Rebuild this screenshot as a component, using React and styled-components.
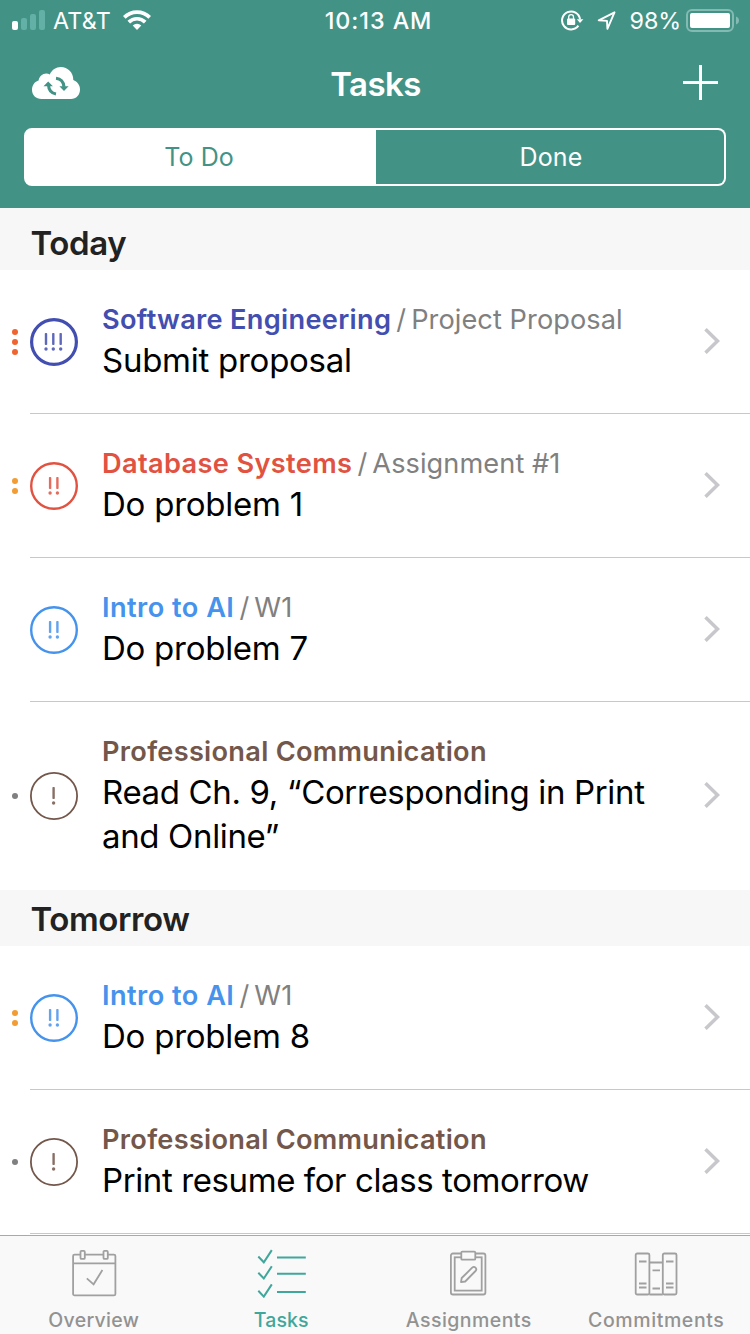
import React from "react";
import styled, { createGlobalStyle } from "styled-components";

const GlobalStyle = createGlobalStyle`
  * { box-sizing: border-box; }
  body { margin: 0; background: #fff; font-family: Inter, "Liberation Sans", sans-serif; }
`;

const Screen = styled.div`
  width: 750px;
  height: 1334px;
  display: flex;
  flex-direction: column;
  overflow: hidden;
  background: #fff;
`;

const Header = styled.header`
  flex: none;
  height: 208px;
  background: #429386;
  color: #fff;
`;

const StatusBar = styled.div`
  height: 40px;
  display: grid;
  grid-template-columns: 1fr auto 1fr;
  align-items: center;
  padding: 0 11px 0 12px;
  font-size: 23.3px;
  line-height: 38px;
`;

const StatusSide = styled.div`
  display: flex;
  align-items: center;
  justify-content: ${(p) => (p.$end ? "flex-end" : "flex-start")};
  svg { display: block; flex: none; }
`;

const Carrier = styled.span`
  padding-top: 2px;
  margin: 0 12px 0 8px;
  letter-spacing: 0.2px;
`;

const Clock = styled.span`
  padding: 2px 0 0 6px;
  font-weight: 500;
  letter-spacing: 0.95px;
`;

const StatusIcons = styled.div`
  display: flex;
  align-items: center;
  gap: 13px;
`;

const Percent = styled.span`
  padding-top: 2px;
  margin: 0 5px 0 14px;
  letter-spacing: -0.1px;
`;

const NavBar = styled.div`
  height: 88px;
  display: grid;
  grid-template-columns: 1fr auto 1fr;
  align-items: center;
  padding: 0 32px;
  svg { display: block; margin-bottom: 2px; }
  svg:last-child { justify-self: end; margin-bottom: 3px; }
`;

const NavTitle = styled.h1`
  margin: 0;
  font-size: 33px;
  line-height: 44px;
  font-weight: 600;
  letter-spacing: -0.6px;
  padding-left: 1px;
`;

const Segments = styled.div`
  display: grid;
  grid-template-columns: 352px 350px;
  margin: 0 24px;
  height: 58px;
`;

const Segment = styled.div`
  display: flex;
  align-items: center;
  justify-content: center;
  padding: ${(p) => (p.$active ? "0 2px 1px 0" : "0 0 1px 2px")};
  font-size: 25px;
  letter-spacing: 0.1px;
  border: 2px solid #fff;
  border-left-width: ${(p) => (p.$active ? 2 : 0)}px;
  border-radius: ${(p) => (p.$active ? "8px 0 0 8px" : "0 8px 8px 0")};
  background: ${(p) => (p.$active ? "#fff" : "transparent")};
  color: ${(p) => (p.$active ? "#429386" : "#fff")};
`;

const List = styled.main`
  flex: 1;
  min-height: 0;
  overflow: hidden;
`;

const SectionTitle = styled.h2`
  margin: 0;
  height: ${(p) => p.$height}px;
  padding: ${(p) => p.$top}px 0 0 30.5px;
  background: #f7f7f7;
  color: #222;
  font-size: 33px;
  line-height: 44px;
  font-weight: 600;
  letter-spacing: -0.4px;
`;

const Row = styled.div`
  display: flex;
  align-items: center;
  height: ${(p) => p.$height}px;
`;

const Dots = styled.div`
  width: 30px;
  flex: none;
  display: flex;
  flex-direction: column;
  align-items: center;
  gap: 4px;
`;

const Dot = styled.i`
  width: 6px;
  height: 6px;
  border-radius: 50%;
  background: ${(p) => p.$color};
`;

const RowBody = styled.div`
  flex: 1;
  height: 100%;
  display: flex;
  align-items: center;
  padding-right: 30px;
  border-bottom: 1px solid ${(p) => (p.$last ? "transparent" : "#c8c7cc")};
`;

const Badge = styled.svg`
  flex: none;
  display: block;
  margin: 1px 24px 0 0;
`;

const Texts = styled.div`
  flex: 1;
  margin-bottom: 1px;
  white-space: nowrap;
`;

const Course = styled.div`
  display: flex;
  padding-top: 1px;
  font-size: 27.2px;
  line-height: 37px;
  color: #808080;
`;

const CourseName = styled.span`
  font-weight: 600;
  color: ${(p) => p.$color};
  letter-spacing: ${(p) => p.$track}px;
`;

const Slash = styled.span`
  width: 20px;
  text-align: center;
`;

const Group = styled.span`
  letter-spacing: ${(p) => p.$track}px;
`;

const TaskName = styled.div`
  font-size: 33px;
  line-height: 44px;
  color: #000;
  letter-spacing: ${(p) => p.$track}px;
`;

const Chevron = styled.svg`
  flex: none;
  display: block;
  margin-bottom: 1px;
`;

const TabBar = styled.nav`
  flex: none;
  height: 99px;
  display: grid;
  grid-template-columns: repeat(4, 1fr);
  background: #f9f9f9;
  border-top: 1px solid #a9a9a9;
`;

const Tab = styled.div`
  display: flex;
  flex-direction: column;
  align-items: center;
  padding-top: 12px;
  font-size: 19.5px;
  line-height: 24px;
  font-weight: 500;
  letter-spacing: ${(p) => p.$track}px;
  color: ${(p) => (p.$active ? "#3fa79b" : "#929292")};
  svg { display: block; margin-bottom: 10px; }
`;

const SignalIcon = () => (
  <svg width="33" height="20" viewBox="0 0 33 20" fill="#fff">
    <rect x="0" y="11" width="6" height="9" rx="2" />
    <rect x="9" y="8" width="6" height="12" rx="2" fill="#62b0a6" />
    <rect x="18" y="4" width="6" height="16" rx="2" fill="#62b0a6" />
    <rect x="27" y="0" width="6" height="20" rx="2" fill="#62b0a6" />
  </svg>
);

const WifiIcon = () => (
  <svg width="28" height="20" viewBox="0 0 28 20">
    <g fill="none" stroke="#fff" strokeWidth="3.7">
      <path d="M1.3 7.4a18 18 0 0 1 25.4 0" />
      <path d="M5.8 12.1a11.7 11.7 0 0 1 16.4 0" />
    </g>
    <path d="M14 20l-4.3-4.4a6.2 6.2 0 0 1 8.6 0z" fill="#fff" />
  </svg>
);

const LockRotationIcon = () => (
  <svg width="23" height="21" viewBox="0 0 23 21">
    <path d="M17.4 15.7A9 9 0 1 1 19 9.3" fill="none" stroke="#fff" strokeWidth="2" />
    <path d="M15.8 9.3h6.6L19 13z" fill="#fff" />
    <rect x="6" y="8.5" width="8.2" height="6.5" rx="1" fill="#fff" />
    <path d="M7.7 9V7a2.4 2.4 0 0 1 4.8 0v2" fill="none" stroke="#fff" strokeWidth="1.3" />
  </svg>
);

const LocationIcon = () => (
  <svg width="19" height="19" viewBox="0 0 19 19">
    <path d="M17.5 1.3L1.7 9.3l8.3.6.4 7.9z" fill="none" stroke="#fff" strokeWidth="1.9" strokeLinejoin="round" />
  </svg>
);

const BatteryIcon = () => (
  <svg width="53" height="23" viewBox="0 0 53 23">
    <rect x="1" y="1" width="46" height="21" rx="5" fill="none" stroke="#83bab2" strokeWidth="2" />
    <rect x="4" y="4" width="40" height="15" rx="2" fill="#fff" />
    <path d="M50 7.5c2 .7 3 2.2 3 4s-1 3.3-3 4z" fill="#83bab2" />
  </svg>
);

const CloudSyncIcon = () => (
  <svg width="48" height="32" viewBox="0 0 48 32">
    <path d="M9.5 32C4 32 0 28 0 22.7 0 18 3 14.5 6.6 13.5 7.2 9.5 10.5 6.6 14.2 6.6c1.4 0 2.600.3 3.600.8C19.8 3 24 0 28.8 0 35.8 0 41.3 5.5 41.3 13c4 1.5 6.7 5 6.7 9.5 0 5.5-3.8 9.5-9 9.5z" fill="#fff" />
    <g fill="none" stroke="#429386" strokeWidth="3.1">
      <path d="M24 27c-4.5-.8-7.3-4-7.5-9" />
      <path d="M24 11.3c4.5.5 7.5 3.500 8 8.500" />
    </g>
    <path d="M11.5 19.3l4.7-4.9 4.7 4.9zM27.4 19.2h9.2l-4.6 4.9z" fill="#429386" />
  </svg>
);

const PlusIcon = () => (
  <svg width="35" height="35" viewBox="0 0 35 35">
    <path d="M16 0h3v16h16v3H19v16h-3V19H0v-3h16z" fill="#fff" />
  </svg>
);

const marks = { 1: [23.6], 2: [20.1, 27.4], 3: [16, 23.3, 30.7] };
const rings = { 1: 1.8, 2: 2.4, 3: 3.2 };

const PriorityBadge = ({ level, color }) => (
  <Badge width="48" height="48" viewBox="0 0 48 48">
    <circle cx="24" cy="24" r={24 - rings[level] / 2} fill="none" stroke={color} strokeWidth={rings[level]} />
    {marks[level].map((x) => (
      <g key={x} fill={color} opacity="0.85">
        <rect x={x - 1.2} y="15" width="2.4" height="12" rx="0.8" />
        <circle cx={x} cy="31" r="1.7" />
      </g>
    ))}
  </Badge>
);

const ChevronIcon = () => (
  <Chevron width="16" height="26" viewBox="0 0 16 26">
    <path d="M1.5 1.3L13.5 13 1.5 24.7" fill="none" stroke="#c7c7cc" strokeWidth="3.5" />
  </Chevron>
);

const OverviewIcon = () => (
  <svg width="50" height="50" viewBox="0 0 50 50" fill="none" stroke="#a0a0a0" strokeWidth="1.8">
    <rect x="4.1" y="6.6" width="42.3" height="40.8" rx="1.5" />
    <path d="M4 15.3h42.5" />
    <rect x="11.5" y="2.9" width="4.3" height="8" rx="1" fill="#f9f9f9" />
    <rect x="34.5" y="2.9" width="4.3" height="8" rx="1" fill="#f9f9f9" />
    <path d="M17.8 30.3l6.8 6 8.8-14.3" />
  </svg>
);

const TasksIcon = () => (
  <svg width="50" height="50" viewBox="0 0 50 50" fill="none" stroke="#3fa79b" strokeWidth="2">
    {[0, 16.2, 34.3].map((y) => (
      <path key={y} d={`M2.3 ${y + 8.5}l5.5 5.800 8-12.200M21 ${y + 9.6}H49.8`} />
    ))}
  </svg>
);

const AssignmentsIcon = () => (
  <svg width="50" height="50" viewBox="0 0 50 50" fill="none" stroke="#a0a0a0" strokeWidth="1.8">
    <rect x="6.9" y="5.5" width="34.5" height="41" rx="2" />
    <rect x="10.7" y="9.3" width="27" height="33.3" />
    <rect x="17.3" y="3.7" width="14" height="8" rx="1" fill="#f9f9f9" />
    <path d="M17 34.200l.7-4.200L28.200 19.700a2.200 2.200 0 0 1 3.300 3.300L21.200 33.500z" strokeLinejoin="round" />
  </svg>
);

const CommitmentsIcon = () => (
  <svg width="50" height="50" viewBox="0 0 50 50" fill="none" stroke="#a0a0a0" strokeWidth="1.8">
    <rect x="4.700" y="5.500" width="13.700" height="41" rx="1.500" />
    <rect x="31.800" y="5.500" width="13.700" height="41" rx="1.500" />
    <path d="M18.400 14.500h13.400M18.400 46.500h13.400M8 13.500h7.500M35 13.500h7.500M21.500 22.300h7.500M8 35.500h7.500M8 39.500h7.500M35 35.500h7.500M35 39.500h7.500M21.500 40.500h7.500" />
  </svg>
);

const sections = [
  {
    title: "Today", height: 62, top: 13,
    tasks: [
      { course: "Software Engineering", track: 0.3, group: "Project Proposal", groupTrack: 0.06, name: "Submit proposal", nameTrack: -0.26, level: 3, color: "#424eb0", dots: 3, dot: "#f0652f" },
      { course: "Database Systems", track: 0.35, group: "Assignment #1", groupTrack: 0.06, name: "Do problem 1", nameTrack: -0.24, level: 2, color: "#e15241", dots: 2, dot: "#f29c33" },
      { course: "Intro to AI", track: 0.45, group: "W1", groupTrack: 0.2, name: "Do problem 7", nameTrack: -0.26, level: 2, color: "#4593ec", dots: 0 },
      { course: "Professional Communication", track: 0.28, name: ["Read Ch. 9, “Corresponding in Print", "and Online”"], nameTrack: -0.35, level: 1, color: "#74574b", dots: 1, dot: "#808080" },
    ],
  },
  {
    title: "Tomorrow", height: 56, top: 7,
    tasks: [
      { course: "Intro to AI", track: 0.45, group: "W1", groupTrack: 0.2, name: "Do problem 8", nameTrack: -0.24, level: 2, color: "#4593ec", dots: 2, dot: "#f29c33" },
      { course: "Professional Communication", track: 0.28, name: "Print resume for class tomorrow", nameTrack: -0.4, level: 1, color: "#74574b", dots: 1, dot: "#808080", more: true },
    ],
  },
];

const tabs = [
  { label: "Overview", Icon: OverviewIcon, track: 0.3 },
  { label: "Tasks", Icon: TasksIcon, track: 0.1, active: true },
  { label: "Assignments", Icon: AssignmentsIcon, track: 0.45 },
  { label: "Commitments", Icon: CommitmentsIcon, track: 0.6 },
];

const TaskRow = ({ task, last }) => {
  const lines = [].concat(task.name);
  return (
    <Row $height={144 + (lines.length - 1) * 44}>
      <Dots>
        {Array.from({ length: task.dots }, (_, i) => <Dot key={i} $color={task.dot} />)}
      </Dots>
      <RowBody $last={last}>
        <PriorityBadge level={task.level} color={task.color} />
        <Texts>
          <Course>
            <CourseName $color={task.color} $track={task.track}>{task.course}</CourseName>
            {task.group && <Slash>/</Slash>}
            {task.group && <Group $track={task.groupTrack}>{task.group}</Group>}
          </Course>
          {lines.map((line) => <TaskName key={line} $track={task.nameTrack}>{line}</TaskName>)}
        </Texts>
        <ChevronIcon />
      </RowBody>
    </Row>
  );
};

export default function App() {
  return (
    <Screen>
      <GlobalStyle />
      <Header>
        <StatusBar>
          <StatusSide>
            <SignalIcon />
            <Carrier>AT&amp;T</Carrier>
            <WifiIcon />
          </StatusSide>
          <Clock>10:13 AM</Clock>
          <StatusSide $end>
            <StatusIcons>
              <LockRotationIcon />
              <LocationIcon />
            </StatusIcons>
            <Percent>98%</Percent>
            <BatteryIcon />
          </StatusSide>
        </StatusBar>
        <NavBar>
          <CloudSyncIcon />
          <NavTitle>Tasks</NavTitle>
          <PlusIcon />
        </NavBar>
        <Segments>
          <Segment $active>To Do</Segment>
          <Segment>Done</Segment>
        </Segments>
      </Header>
      <List>
        {sections.map((s) => (
          <section key={s.title}>
            <SectionTitle $height={s.height} $top={s.top}>{s.title}</SectionTitle>
            {s.tasks.map((t, i) => (
              <TaskRow key={i} task={t} last={i === s.tasks.length - 1 && !t.more} />
            ))}
          </section>
        ))}
      </List>
      <TabBar>
        {tabs.map(({ label, Icon, track, active }) => (
          <Tab key={label} $active={active} $track={track}>
            <Icon />
            {label}
          </Tab>
        ))}
      </TabBar>
    </Screen>
  );
}
